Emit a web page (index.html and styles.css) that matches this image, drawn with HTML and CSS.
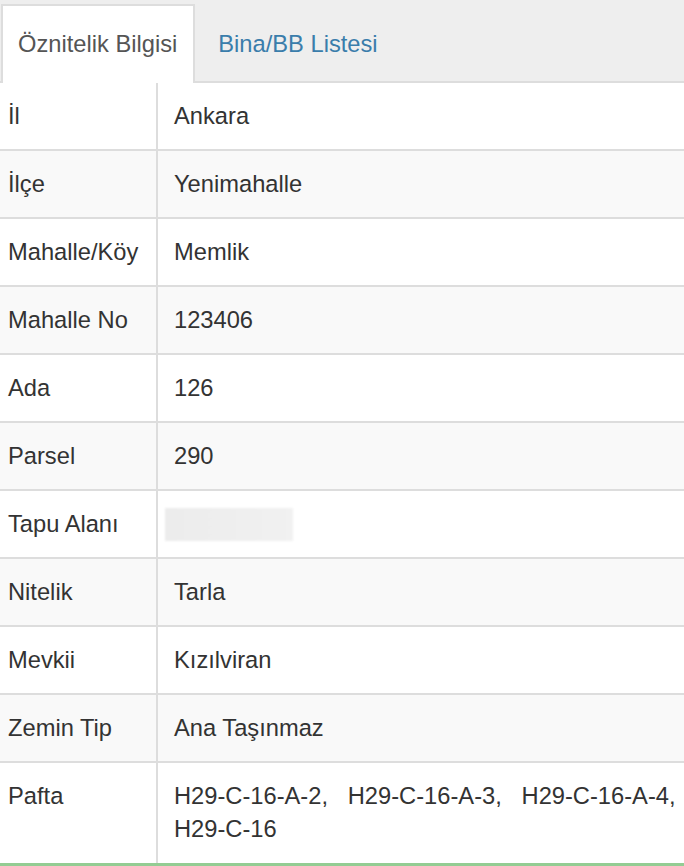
FILE: index.html
```html
<!DOCTYPE html>
<html lang="tr">
<head>
    <meta charset="UTF-8">
    <meta name="viewport" content="width=device-width, initial-scale=1.0">
    <title>Parsel Sorgu</title>
    <link rel="stylesheet" href="styles.css">
</head>
<body>

    <div class="panel">

        <ul class="tabs">
            <li class="active"><a href="#">Öznitelik Bilgisi</a></li>
            <li><a href="#">Bina/BB Listesi</a></li>
        </ul>

        <table class="info">
            <tr><td>İl</td><td>Ankara</td></tr>
            <tr><td>İlçe</td><td>Yenimahalle</td></tr>
            <tr><td>Mahalle/Köy</td><td>Memlik</td></tr>
            <tr><td>Mahalle No</td><td>123406</td></tr>
            <tr><td>Ada</td><td>126</td></tr>
            <tr><td>Parsel</td><td>290</td></tr>
            <tr><td>Tapu Alanı</td><td><div class="hidden-value"></div></td></tr>
            <tr><td>Nitelik</td><td>Tarla</td></tr>
            <tr><td>Mevkii</td><td>Kızılviran</td></tr>
            <tr><td>Zemin Tip</td><td>Ana Taşınmaz</td></tr>
            <tr><td>Pafta</td><td><span class="code">H29-C-16-A-2,</span>&nbsp;&nbsp; <span class="code">H29-C-16-A-3,</span>&nbsp;&nbsp; <span class="code">H29-C-16-A-4,</span> <span class="code">H29-C-16</span></td></tr>
        </table>

    </div>

</body>
</html>
```

FILE: styles.css
```css
body{
    margin: 0;
    font-family: "Liberation Sans", Arial, sans-serif;
    font-size: 23.7px;
    color: #333;
    background: #fff;
}

.panel{
    border-bottom: 3px solid #93cc93;
}

.tabs{
    display: flex;
    margin: 0;
    padding: 4px 0 0 1px;
    list-style: none;
    background: #eee;
    border-bottom: 2px solid #ddd;
}

.tabs li{
    margin-bottom: -2px;
}

.tabs a{
    display: block;
    padding: 0 16px 0 15px;
    height: 75px;
    line-height: 76px;
    text-decoration: none;
    color: #3a7dab;
    border: 2px solid transparent;
    border-bottom: none;
}

.tabs .active a{
    color: #555;
    background: #fff;
    border-color: #ddd;
    height: 77px;
}

.tabs li + li a{
    padding-left: 21px;
}

.info{
    width: 100%;
    border-collapse: collapse;
}

.info td{
    padding: 17px 8px 16px 8px;
    line-height: 33px;
    border-bottom: 2px solid #ddd;
    vertical-align: top;
}

.info tr:last-child td{
    border-bottom: none;
    padding-bottom: 17px;
}

.info td:first-child{
    width: 140px;
    border-right: 2px solid #ddd;
    white-space: nowrap;
}

.info td + td{
    padding-left: 16px;
    padding-right: 2px;
}

.info tr:nth-child(even) td{
    background: #f9f9f9;
}

.code{
    white-space: nowrap;
}

.hidden-value{
    width: 128px;
    height: 33px;
    margin-left: -9px;
    background: linear-gradient(90deg, #ececec, #f1f1f1);
    filter: blur(1px);
}
```
